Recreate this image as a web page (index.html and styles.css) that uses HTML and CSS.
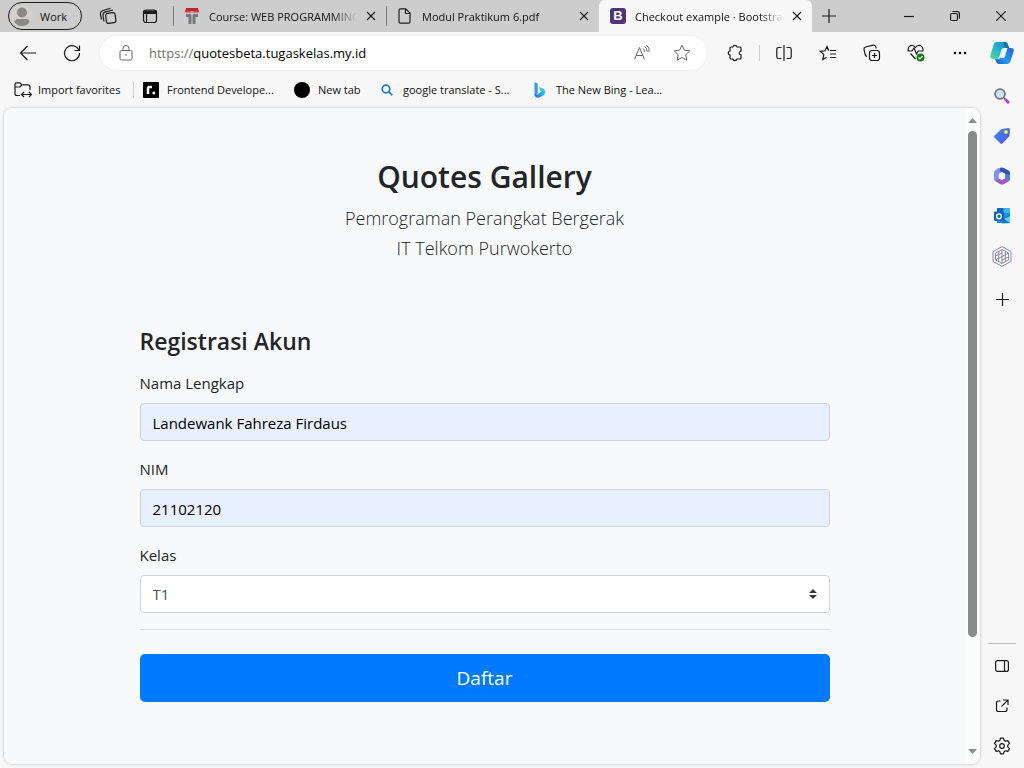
FILE: index.html
```html
<!DOCTYPE html>
<html lang="en">
<head>
<meta charset="utf-8">
<meta name="viewport" content="width=device-width, initial-scale=1">
<title>Checkout example · Bootstrap</title>
<link rel="stylesheet" href="styles.css">
</head>
<body>
<div class="browser">
  <header class="tabstrip">
    <div class="workspace">
      <button class="profile" type="button">
        <svg width="22" height="22" viewBox="0 0 22 22"><circle cx="11" cy="11" r="11" fill="#d4d0cc"/><circle cx="11" cy="7.500" r="5" fill="#8a8785"/><path d="M3.500 17c0-2 1.500-3 3.500-3h8c2 0 3.500 1 3.500 3-1.800 3-4.500 4-7.500 4s-5.700-1-7.500-4z" fill="#8a8785"/></svg>
        <span>Work</span>
      </button>
      <button class="icon-btn small" type="button" aria-label="Workspaces">
        <svg class="line" width="18" height="18" viewBox="0 0 18 18"><rect x="7" y="6" width="9.500" height="10" rx="2" transform="rotate(-8 12 11)"/><path d="M5 14.500 4 9q-.3-3.500 2.500-4.200L14 3M2.500 12.500 1.500 8Q1 4.500 4 3.500l7.500-2.300"/></svg>
      </button>
      <button class="icon-btn small" type="button" aria-label="Tab actions">
        <svg class="line" width="16" height="16" viewBox="0 0 16 16"><rect x="1.500" y="2" width="13" height="12.500" rx="2.500"/><path d="M1.500 3.500h13M1.500 5h13" stroke-width="2"/><path d="M4.500 6v8"/></svg>
      </button>
    </div>
    <nav class="tabs" aria-label="Tabs">
      <div class="tab">
        <svg width="16" height="16" viewBox="0 0 16 16"><path d="M2 0h12v3H2z" fill="#b5282f"/><path d="M1 1.500 8 4l7-2.500v3H1z" fill="#e7383f"/><path d="M2 6h4.500q1 0 1 2v8H4.500V9H2zM14 6H9.500q-1 0-1 2v8h3V9H14z" fill="#77787b"/></svg>
        <a class="tab-title" href="#">Course: WEB PROGRAMMING</a>
        <button class="close" type="button" aria-label="Close tab"><svg class="line" width="10" height="10" viewBox="0 0 10 10"><path d="m1 1 8 8M9 1 1 9"/></svg></button>
      </div>
      <div class="tab">
        <svg class="line" width="16" height="16" viewBox="0 0 16 16"><path d="M3.500.8h5.200l4.300 4.300v8.600q0 1.500-1.500 1.500h-8Q2 15.200 2 13.700V2.300Q2 .8 3.500.8zM8.500 1v4.500H13"/></svg>
        <a class="tab-title" href="#">Modul Praktikum 6.pdf</a>
        <button class="close" type="button" aria-label="Close tab"><svg class="line" width="10" height="10" viewBox="0 0 10 10"><path d="m1 1 8 8M9 1 1 9"/></svg></button>
      </div>
      <div class="tab active">
        <span class="bootstrap-mark" aria-hidden="true">B</span>
        <a class="tab-title" href="#">Checkout example · Bootstrap</a>
        <button class="close" type="button" aria-label="Close tab"><svg class="line" width="10" height="10" viewBox="0 0 10 10"><path d="m1 1 8 8M9 1 1 9"/></svg></button>
      </div>
      <button class="new-tab" type="button" aria-label="New tab"><svg class="line" width="14" height="14" viewBox="0 0 14 14"><path d="M7 0v14M0 7h14"/></svg></button>
    </nav>
    <div class="window-controls">
      <button type="button" aria-label="Minimize"><svg class="line" width="10" height="10" viewBox="0 0 10 10"><path d="M0 5.500h10"/></svg></button>
      <button type="button" aria-label="Restore"><svg class="line" width="10" height="10" viewBox="0 0 10 10"><rect x=".5" y="2.500" width="7" height="7" rx="1.500"/><path d="M2.500.5H7Q9.500.5 9.500 3v4.500"/></svg></button>
      <button type="button" aria-label="Close"><svg class="line" width="10" height="10" viewBox="0 0 10 10"><path d="m0 0 10 10M10 0 0 10"/></svg></button>
    </div>
  </header>

  <div class="frame">
    <div class="main">
      <div class="toolbar">
        <button class="icon-btn" type="button" aria-label="Back"><svg class="line" width="18" height="16" viewBox="0 0 18 16"><path d="M17 8H1.500M8.500 1l-7 7 7 7"/></svg></button>
        <button class="icon-btn" type="button" aria-label="Refresh"><svg class="line" width="18" height="18" viewBox="0 0 18 18"><path d="M16 6.500A7.500 7.500 0 1 0 16.500 9M16.500 1.500v5h-5"/></svg></button>
        <div class="address">
          <svg class="line muted" width="14" height="16" viewBox="0 0 14 16"><rect x="1" y="5.500" width="12" height="9.500" rx="1.500"/><path d="M4 5.500V3.500a3 3 0 0 1 6 0v2"/><circle cx="7" cy="10" r=".8" fill="#666" stroke="none"/></svg>
          <a class="url" href="#"><span>https://</span>quotesbeta.tugaskelas.my.id</a>
          <button class="icon-btn" type="button" aria-label="Read aloud"><svg class="line muted" width="18" height="16" viewBox="0 0 18 16"><path d="M1.500 14.500 6.500 2.500l5 12M3.200 10.500h6.600M10 3.500q1.500 1 1.500 3.500M11.500 1.500q3 1.500 2.500 5.500M13.500 0q3.500 3 2.500 7"/></svg></button>
          <button class="icon-btn" type="button" aria-label="Add to favorites"><svg class="line muted" width="18" height="18" viewBox="0 0 18 18"><path d="m9 1.200 2.400 5 5.400.7-4 3.800 1 5.500L9 13.500l-4.800 2.700 1-5.500-4-3.800 5.400-.7z"/></svg></button>
        </div>
        <button class="icon-btn" type="button" aria-label="Extensions"><svg class="line" width="16" height="18" viewBox="0 0 16 18"><path d="M4 3h1.800a2.200 2.200 0 0 1 4.200 0H13q1 0 1 1v3.200h-.5a1.900 1.900 0 0 0 0 3.600h.5V14q0 1-1 1h-3a2.200 2.200 0 0 1-4.200 0H4q-1 0-1-1v-3h-.3a2.100 2.100 0 0 1 0-4H3V4q0-1 1-1z"/></svg></button>
        <span class="divider"></span>
        <button class="icon-btn" type="button" aria-label="Split screen"><svg class="line" width="16" height="16" viewBox="0 0 16 16"><path d="M8 0v16M5.500 2.500h-3Q.8 2.500.8 4.200v7.600q0 1.700 1.700 1.700h3M10.500 2.500h3q1.700 0 1.700 1.700v7.600q0 1.700-1.700 1.700h-3"/></svg></button>
        <button class="icon-btn" type="button" aria-label="Favorites"><svg class="line" width="18" height="18" viewBox="0 0 18 18"><path d="M9.500 6.500 8 2.500l-2 4.300-4.800.5 3.600 3.200-1 5 3.700-2.200M8 2.500l1.800 4M11 6.500h6M11 10h6M11 13.500h6"/></svg></button>
        <button class="icon-btn" type="button" aria-label="Collections"><svg class="line" width="18" height="18" viewBox="0 0 18 18"><rect x="6.500" y="6.500" width="10" height="10" rx="2.500"/><path d="M11.500 9v5M9 11.500h5M4 12.500q-1.500-.5-2-2.500L1 5.500Q.8 3.500 2.600 3l7.500-1.800q2-.3 2.700 1.500l.4 1.800"/></svg></button>
        <button class="icon-btn" type="button" aria-label="Browser essentials"><svg class="line" width="18" height="18" viewBox="0 0 18 18"><path d="M1.500 7Q.5 4.500 2.200 2.600C4.500.5 7 1.500 8.500 3.500c1.500-2 4-3 6.300-.9Q16.800 5 15.500 7.500M.5 7H5l2-3 2.500 6 1.700-3H15M3.500 9.500l5 5.500"/><circle cx="13.500" cy="13.500" r="4" fill="#107c10" stroke="none"/><path d="m11.500 13.500 1.400 1.400 2.600-2.800" stroke="#fff"/></svg></button>
        <button class="icon-btn" type="button" aria-label="Settings and more"><svg width="14" height="4" viewBox="0 0 14 4"><circle cx="2" cy="2" r="1.300"/><circle cx="7" cy="2" r="1.300"/><circle cx="12" cy="2" r="1.300"/></svg></button>
      </div>

      <nav class="bookmarks" aria-label="Favorites bar">
        <a href="#"><svg class="line" width="18" height="16" viewBox="0 0 18 16"><path d="M6 13.500H3Q1 13.500 1 11.500v-9Q1 .8 2.700.8H6l1.800 2H14q2 0 2 2V8M1 5h5l1.800-2M8 12.500h9M10 10l-2.500 2.500L10 15M15 10l2.500 2.500L15 15"/></svg>Import favorites</a>
        <a href="#"><svg width="16" height="16" viewBox="0 0 16 16"><rect width="16" height="16" rx="1"/><path d="M5 12V6.500q0-1.500 1.500-1.500H9" fill="none" stroke="#fff" stroke-width="2.500"/><circle cx="10.800" cy="11" r="1.500" fill="#fff"/></svg>Frontend Develope...</a>
        <a href="#"><svg width="16" height="16" viewBox="0 0 16 16"><circle cx="8" cy="8" r="8"/></svg>New tab</a>
        <a href="#"><svg width="16" height="16" viewBox="0 0 16 16" fill="none" stroke="#1a78cf" stroke-width="1.700"><circle cx="7" cy="7" r="3.800"/><path d="m9.800 9.800 3.400 3.400"/></svg>google translate - S...</a>
        <a href="#"><svg width="16" height="16" viewBox="0 0 16 16"><defs><linearGradient id="bing" x2="1" y2="0"><stop stop-color="#2b62e8"/><stop offset="1" stop-color="#27c9f4"/></linearGradient></defs><path d="m2.500.3 3.200 1.200v10L2.500 13.500z" fill="#3597f0"/><path d="m7 5 4.500 1.800q2 1.200 1.500 4.200L8.500 9z" fill="#29c8ef"/><path d="M2.500 12 5.700 12.500 9.500 9.500l3.500.5q.5 2-1.300 3.200L7.500 15.500q-5 .8-5-3.500z" fill="url(#bing)"/></svg>The New Bing - Lea...</a>
      </nav>

      <div class="viewport">
        <main class="page">
          <div class="container">
            <div class="intro">
              <h2>Quotes Gallery</h2>
              <p>Pemrograman Perangkat Bergerak<br>IT Telkom Purwokerto</p>
            </div>
            <form>
              <h4>Registrasi Akun</h4>
              <div class="field">
                <label for="nama">Nama Lengkap</label>
                <input id="nama" type="text" value="Landewank Fahreza Firdaus">
              </div>
              <div class="field">
                <label for="nim">NIM</label>
                <input id="nim" type="text" value="21102120">
              </div>
              <div class="field">
                <label for="kelas">Kelas</label>
                <div class="select-wrap">
                  <select id="kelas"><option>T1</option></select>
                  <svg class="caret" width="8" height="10" viewBox="0 0 4 5"><path fill="#343a40" d="M2 0 0 2h4zm0 5L0 3h4z"/></svg>
                </div>
              </div>
              <hr>
              <button class="submit" type="submit">Daftar</button>
            </form>
          </div>
        </main>
        <div class="scrollbar" aria-hidden="true">
          <svg width="9" height="5" viewBox="0 0 9 5"><path d="M4.500 0 9 5H0z" fill="#8b8b8b"/></svg>
          <div class="track"><div class="thumb"></div></div>
          <svg width="9" height="5" viewBox="0 0 9 5"><path d="M4.500 5 9 0H0z" fill="#8b8b8b"/></svg>
        </div>
      </div>
    </div>

    <aside class="sidebar">
      <button class="copilot" type="button" aria-label="Copilot"><svg width="24" height="24" viewBox="0 0 24 24"><defs><linearGradient id="cpa" x1="1" y1="0" x2="0" y2="1"><stop stop-color="#1684c4"/><stop offset=".5" stop-color="#20b3d5"/><stop offset="1" stop-color="#5dd98e"/></linearGradient><linearGradient id="cpb" x1="1" x2="0" y2="1"><stop stop-color="#2264dc"/><stop offset=".6" stop-color="#209df4"/><stop offset="1" stop-color="#1851cc"/></linearGradient></defs><path d="M7 1h8q2 0 2.700 2l1.300 4h-5q-2 0-2.600 2l-2.200 7q-.6 2-2.600 2H3q-3.500 0-2.500-4L3.500 4Q4.300 1 7 1z" fill="url(#cpa)"/><path d="M17.500 7H21q3.500 0 2.500 4l-3 9q-1 3-3.500 3H9q-2 0-2.700-2L5 18h3q2 0 2.600-2l.8-2.500 1.900-5.500q.5-1 1.700-1z" fill="url(#cpb)"/><path d="M14.500 7h3l-2.600 8.500q-.5 1.500-2 1.500h-2.700l2.500-8q.5-2 1.800-2z" fill="#f7f7f7"/><path d="m13 1 2 0q2 0 2.700 2l1.300 4h-4z" fill="#176f9d"/></svg></button>
      <button type="button" aria-label="Search"><svg width="16" height="16" viewBox="0 0 16 16"><circle cx="6" cy="6" r="4.900" fill="#c7e5fa" stroke="#747474" stroke-width="1.800"/><path d="m10 10 1.500 1.500" stroke="#666" stroke-width="2"/><path d="m11.500 11.500 3.500 3.500" stroke="#bd38e9" stroke-width="2.800"/></svg></button>
      <button type="button" aria-label="Shopping"><svg width="16" height="16" viewBox="0 0 16 16"><defs><linearGradient id="tag" y2="1"><stop stop-color="#3c91fb"/><stop offset="1" stop-color="#4854e8"/></linearGradient></defs><path d="m7.500 1 7-1Q16 0 16 1.500l-.5 6.500-7 7.500q-1 .8-2 0l-6-6q-.8-1 0-2z" fill="url(#tag)"/><circle cx="12" cy="4" r="1.700" fill="#fff3a0" stroke="#e8b82b"/></svg></button>
      <button type="button" aria-label="Microsoft 365"><svg width="18" height="18" viewBox="0 0 18 18"><path d="M9 .5 5 1.300 2 3.500Q1 4.500 1 6v6q0 1.500 1.500 2.300L6 12V7l3-2 2-3z" fill="#8292e6"/><path d="M7.500.8h3L15.500 3.600Q17 4.500 17 6v6l-5-2.500V7L9 5 6.500 4z" fill="#3550ad"/><path d="M17 8v4q0 1.500-1.300 2.300l-5 2.900q-1.700.8-3.400 0L2 14l4-2.500L9 13l3-2V9z" fill="#9d5cc0"/><path d="M12 7v4l3.500 3.300Q17 13.500 17 12V7.500z" fill="#4c7de0"/><path d="m9 5.300 3.200 1.800v3.800L9 12.700l-3.200-1.800V7.100z" fill="#f7f7f7"/></svg></button>
      <button type="button" aria-label="Outlook"><svg width="16" height="16" viewBox="0 0 16 16"><path d="M3 0h13v15H3z" fill="#1494df"/><path d="M3 0h6.500v5H3z" fill="#1067b8"/><path d="M9.500 0H16v5H9.500z" fill="#32b9ed"/><path d="m9 10 7-3v8l-8 .5z" fill="#0f77c7"/><path d="m10 11 6 4V8z" fill="#50d3f5"/><rect y="3.500" width="10" height="9.500" rx="1" fill="#0f65b8"/><circle cx="5" cy="8.300" r="2.400" fill="none" stroke="#fff" stroke-width="1.400"/></svg></button>
      <button type="button" aria-label="Tools"><svg width="20" height="21" viewBox="0 0 20 21" fill="none"><path d="m10 .6 9 5v9.800l-9 5-9-5V5.600z" stroke="#7c8ac5"/><path d="m10 3.500 6.500 3.600v6.800L10 17.500l-6.500-3.600V7.100zM10 3.500v14M3.500 13.900l13-6.800M3.500 10l6.500-3M10 14l6.500-3M6.700 5.300v10.400M13.300 5.300v10.400" stroke="#888d96"/></svg></button>
      <button class="add" type="button" aria-label="Customize"><svg class="line" width="13" height="13" viewBox="0 0 13 13"><path d="M6.500 0v13M0 6.500h13"/></svg></button>
      <span class="rule"></span>
      <button type="button" aria-label="Sidebar"><svg class="line" width="14" height="12" viewBox="0 0 14 12"><rect x=".6" y=".6" width="12.800" height="10.800" rx="2"/><path d="M9.500.5v11"/></svg></button>
      <button type="button" aria-label="Open in new window"><svg class="line" width="14" height="14" viewBox="0 0 14 14"><path d="M5.500 2H3.500Q1.500 2 1.500 4v6.500q0 2 2 2H10q2 0 2-2v-2M8 1h5v5M13 1 6.500 7.500"/></svg></button>
      <button type="button" aria-label="Settings"><svg class="line" width="18" height="18" viewBox="0 0 18 18"><circle cx="9" cy="9" r="2.300"/><path d="M7.500 1.200h3l.6 2.200 1.400.8 2.300-.6 1.700 2.800-1.700 1.700v1.800l1.700 1.700-1.700 2.800-2.300-.6-1.400.8-.6 2.200h-3l-.6-2.200-1.400-.8-2.300.6-1.700-2.800 1.700-1.700V8.100L1.500 6.400l1.700-2.800 2.300.6 1.400-.8z" stroke-linejoin="round"/></svg></button>
    </aside>
  </div>
</div>
</body>
</html>
```
FILE: styles.css
```css
* { box-sizing: border-box; }

body {
  margin: 0;
  font-family: "Segoe UI", "Open Sans", "Noto Sans", sans-serif;
  font-size: 11px;
  color: #111;
  background: #f7f7f7;
}

button {
  font: inherit;
  color: inherit;
  background: none;
  border: 0;
  padding: 0;
  display: flex;
  align-items: center;
  justify-content: center;
}

a { color: inherit; text-decoration: none; }
svg { display: block; flex: none; }
.line { fill: none; stroke: #1b1b1b; stroke-width: 1.2; }
.line.muted { stroke: #666; stroke-width: 1; }

.browser { display: flex; flex-direction: column; min-height: 100vh; }

/* Tab strip */
.tabstrip { display: flex; height: 32px; background: #cdcdcd; }
.workspace { display: flex; align-items: center; width: 173px; padding-left: 8px; }
.profile {
  width: 74px;
  height: 28px;
  padding-left: 2px;
  gap: 7px;
  justify-content: flex-start;
  border: 1px solid #1b1b1b;
  border-radius: 14px;
}
.tabs { display: flex; flex: 1; min-width: 0; }
.tab {
  display: flex;
  align-items: center;
  flex: 0 1 213px;
  min-width: 0;
  padding: 0 10px 0 11px;
  gap: 9px;
  background: linear-gradient(#7d7d7d, #7d7d7d) left center / 1px 20px no-repeat;
}
.tab.active { background: #f7f7f7; border-radius: 6px 6px 0 0; }
.tab-title {
  flex: 1;
  min-width: 0;
  overflow: hidden;
  white-space: nowrap;
  mask-image: linear-gradient(to right, #000 calc(100% - 24px), transparent);
}
.close { width: 10px; height: 20px; }
.bootstrap-mark {
  width: 16px;
  height: 16px;
  border-radius: 3px;
  background: #4d3378;
  color: #fff;
  font: bold 13px/16px "Liberation Sans", sans-serif;
  text-align: center;
}
.new-tab { width: 34px; }
.window-controls { display: flex; }
.window-controls button { width: 46px; }

/* Toolbar */
.frame { display: flex; flex: 1; }
.main { display: flex; flex-direction: column; flex: 1; min-width: 0; padding-left: 4px; }
.toolbar { display: flex; align-items: center; gap: 4px; height: 42px; padding-left: 4px; }
.icon-btn { width: 40px; height: 34px; flex: none; }
.icon-btn.small { width: 42px; }
.small:nth-child(2) { margin-left: 5px; }
.address {
  display: flex;
  align-items: center;
  flex: 1;
  height: 34px;
  margin: 0 4px;
  padding: 0 5px 0 19px;
  border-radius: 17px;
  background: #fff;
  box-shadow: 0 0 3px #0001;
}
.url { flex: 1; margin-left: 16px; font-size: 13px; color: #000; }
.url span { color: #707070; }
.divider { width: 1px; height: 16px; background: #cfcfcf; }

/* Favorites bar */
.bookmarks {
  display: grid;
  grid-template-columns: 129px 151px 85px 153px auto;
  height: 33px;
  padding: 0 10px 2px;
}
.bookmarks a { display: flex; align-items: center; gap: 8px; white-space: nowrap; }
.bookmarks a:first-child {
  margin-right: 9px;
  gap: 6px;
  border-right: 1px solid #cfcfcf;
  height: 16px;
  align-self: center;
}

/* Page viewport */
.viewport {
  display: flex;
  flex: 1;
  margin: 1px 0 4px;
  border-radius: 8px;
  overflow: hidden;
  background: #f8f9fa;
  box-shadow: 0 0 3px #0004;
}
.page { flex: 1; min-width: 0; font-size: 15px; color: #212529; background: #f8f9fb; }
.container { max-width: 720px; margin: 0 auto; padding: 0 15px; }
.intro { padding: 50px 0 64px; text-align: center; }
h2 { margin: 0 0 7px; font-size: 30px; line-height: 38px; font-weight: 600; }
.intro p { margin: 0; font-size: 18px; line-height: 30px; font-weight: 300; }
h4 { margin: 0 0 16px; font-size: 23px; line-height: 28px; font-weight: 600; }
.field { margin-bottom: 16px; }
label { display: block; margin-bottom: 8px; line-height: 24px; }
input, select {
  display: block;
  width: 100%;
  height: 38px;
  padding: 6px 12px;
  font: inherit;
  border: 1px solid #ced4da;
  border-radius: 4px;
}
input { color: #000; background: #e8f0fe; padding-top: 8px; }
select { appearance: none; color: #495057; background: #fff; }
.select-wrap { position: relative; }
.caret { position: absolute; right: 13px; top: 14px; }
hr { margin: 16px 0 24px; border: 0; border-top: 1px solid #dfe0e2; }
.submit {
  width: 100%;
  height: 48px;
  font-size: 19px;
  color: #fff;
  background: #007bff;
  border-radius: 5px;
}

.scrollbar {
  display: flex;
  flex-direction: column;
  align-items: center;
  width: 15px;
  padding: 10px 0;
  gap: 8px;
  background: #fcfcfc;
}
.track { flex: 1; width: 9px; }
.thumb { height: 83%; border-radius: 5px; background: #8b8b8b; }

/* Sidebar */
.sidebar { display: flex; flex-direction: column; align-items: center; width: 44px; padding-bottom: 2px; }
.sidebar button { width: 40px; height: 40px; flex: none; }
.sidebar .copilot { height: 44px; padding-bottom: 2px; }
.sidebar .add { margin-top: 3px; }
.rule { width: 28px; height: 1px; margin: auto 0 2px; background: #bcbcbc; }
```
